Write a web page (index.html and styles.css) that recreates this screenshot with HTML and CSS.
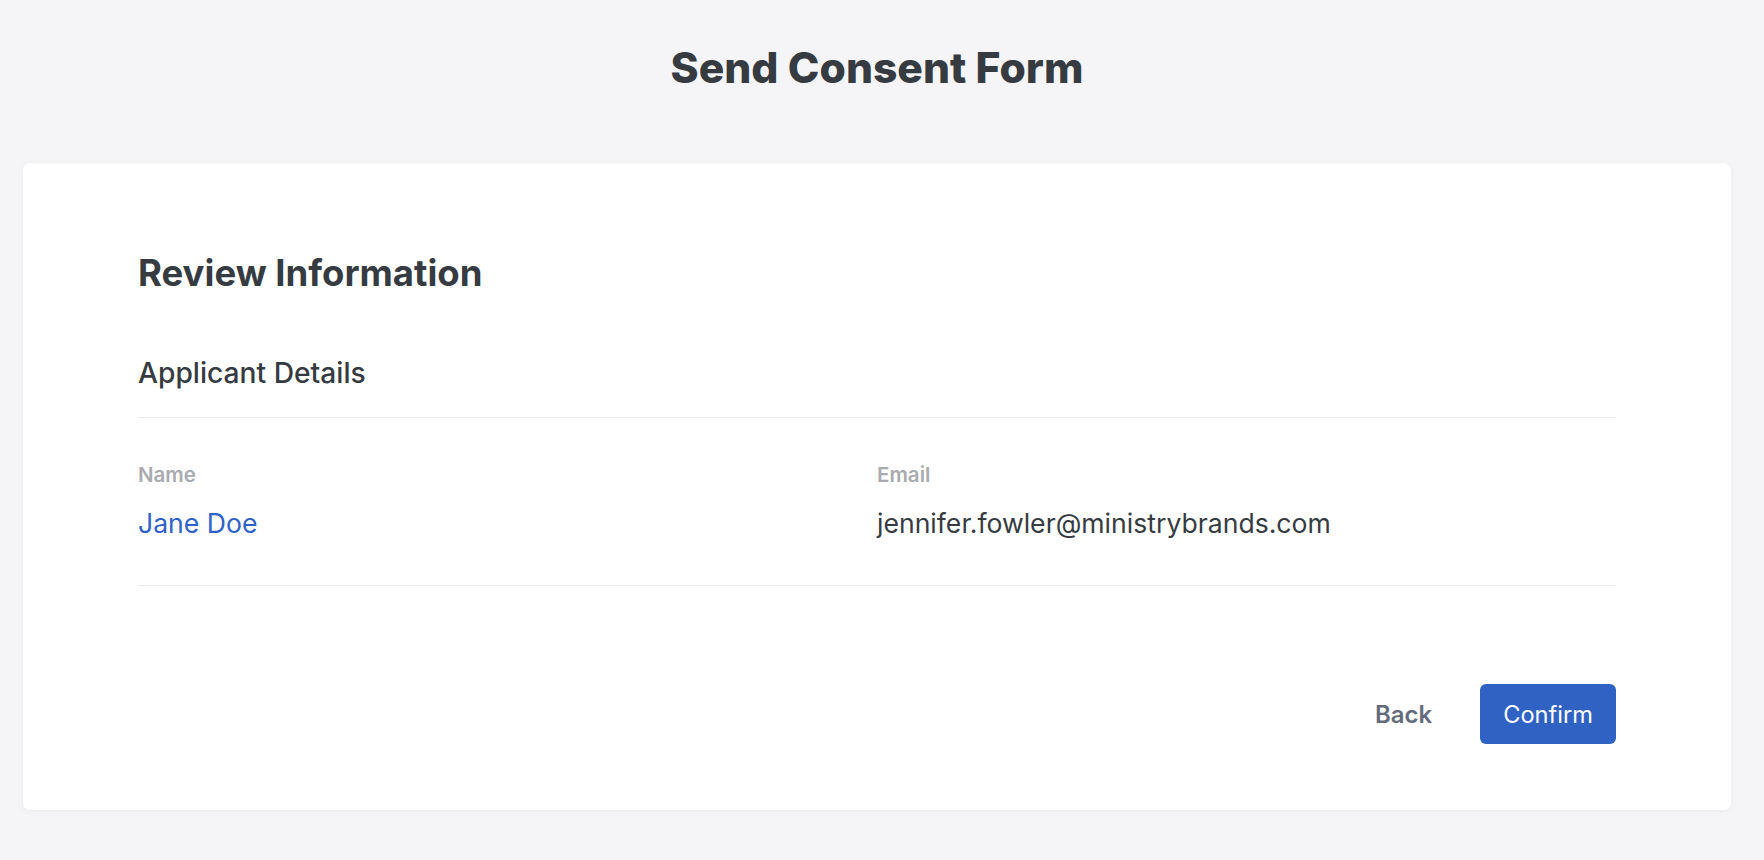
FILE: index.html
```html
<!DOCTYPE html>
<html lang="en">
<head>
<meta charset="utf-8">
<title>Send Consent Form</title>
<link rel="stylesheet" href="styles.css">
</head>
<body>
<div class="page">
  <h1 class="page-title">Send Consent Form</h1>
  <main class="card">
    <h2 class="card-title">Review Information</h2>
    <h3 class="section-title">Applicant Details</h3>
    <div class="details">
      <div class="field">
        <div class="field-label">Name</div>
        <a class="field-value link" href="#">Jane Doe</a>
      </div>
      <div class="field">
        <div class="field-label">Email</div>
        <div class="field-value">jennifer.fowler@ministrybrands.com</div>
      </div>
    </div>
    <div class="actions">
      <button class="btn btn-text" type="button">Back</button>
      <button class="btn btn-primary" type="button">Confirm</button>
    </div>
  </main>
</div>
</body>
</html>
```
FILE: styles.css
```css
* { box-sizing: border-box; }
html, body { margin: 0; padding: 0; }
body {
  background: #f5f5f7;
  font-family: "Inter", "Liberation Sans", sans-serif;
  color: #363b42;
}
.page {
  padding: 42px 33px 50px 23px;
}
.page-title {
  margin: 0;
  text-align: center;
  font-size: 42.6px;
  line-height: 1.2;
  font-weight: 800;
  color: #363b42;
  letter-spacing: 0;
}
.card {
  margin-top: 70px;
  background: #ffffff;
  border-radius: 7px;
  box-shadow: 0 1px 6px rgba(20, 30, 50, 0.05);
  padding: 89px 115px 66px 115px;
}
.card-title {
  margin: 0;
  font-size: 36.5px;
  line-height: 1.2;
  font-weight: 700;
  color: #363b42;
}
.section-title {
  margin: 61px 0 0 0;
  font-size: 28.2px;
  line-height: 1.2;
  font-weight: 500;
  color: #363b42;
  padding-bottom: 26px;
  border-bottom: 1px solid #e8e9ec;
}
.details {
  display: grid;
  grid-template-columns: 1fr 1fr;
  padding: 45px 0 45px 0;
  border-bottom: 1px solid #e8e9ec;
}
.field {
  display: flex;
  flex-direction: column;
  align-items: flex-start;
}
.field-label {
  font-size: 20.5px;
  line-height: 1.2;
  font-weight: 600;
  color: #a9abaf;
}
.field-value {
  margin-top: 21px;
  font-size: 26.6px;
  line-height: 1.2;
  font-weight: 400;
  color: #363b42;
}
.link {
  color: #2f62c6;
  text-decoration: none;
}
.actions {
  display: flex;
  justify-content: flex-end;
  align-items: center;
  gap: 25px;
  margin-top: 98px;
}
.btn {
  font-family: inherit;
  height: 60px;
  padding: 0 23px;
  border: none;
  border-radius: 6px;
  font-size: 23.6px;
  cursor: pointer;
}
.btn-text {
  background: transparent;
  color: #646b7c;
  font-weight: 600;
  font-size: 23.9px;
}
.btn-primary {
  background: #3062c4;
  color: #ffffff;
  font-weight: 400;
  min-width: 136px;
}
```
